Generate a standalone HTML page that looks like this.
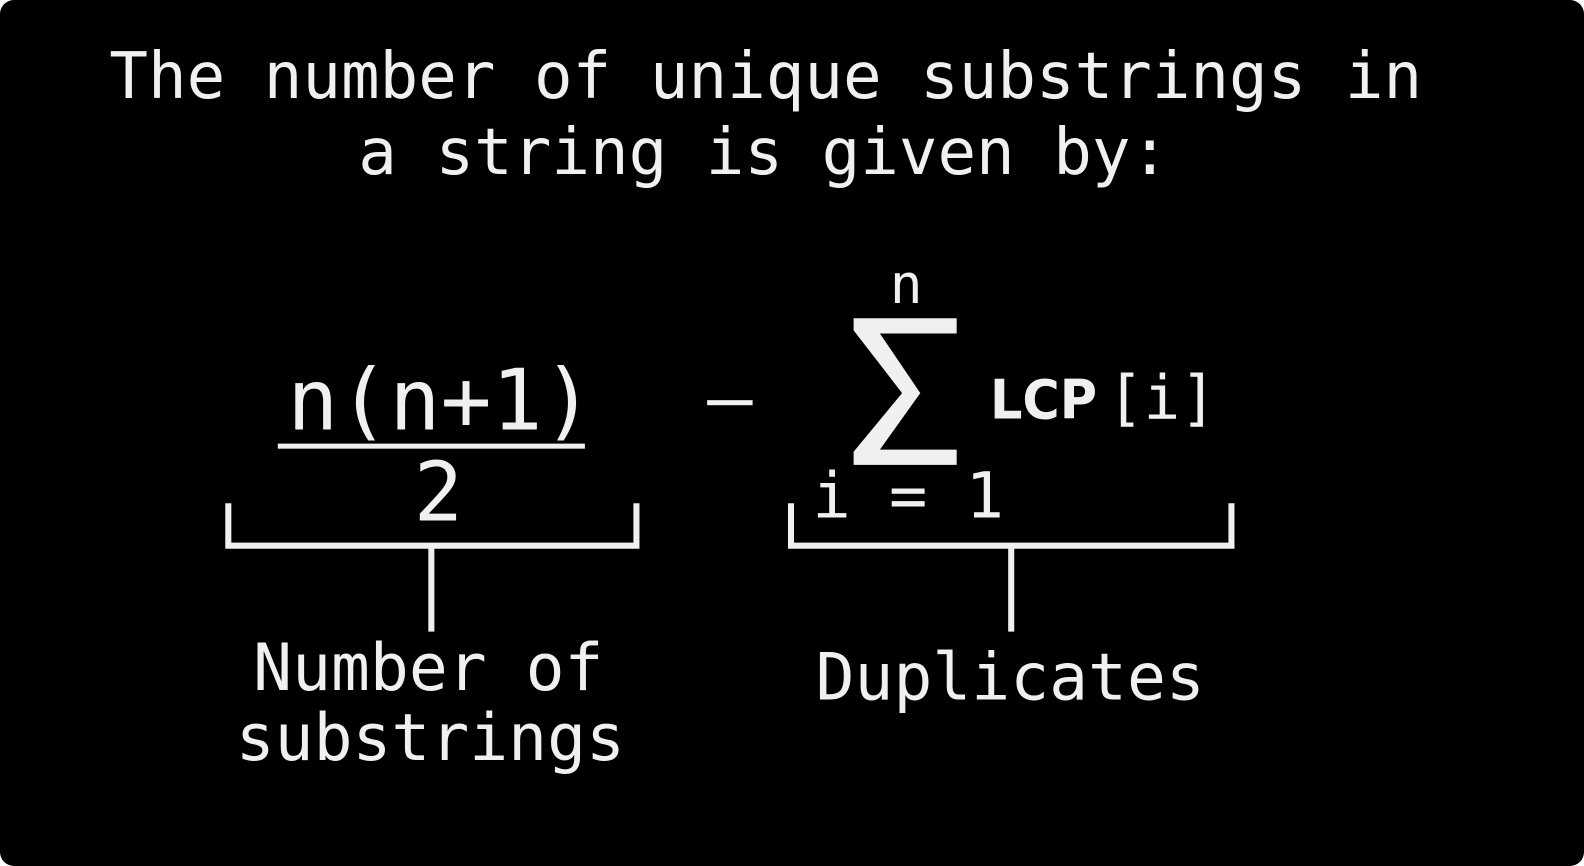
<!DOCTYPE html>
<html><head><style>
html,body{margin:0;padding:0;background:#fff;width:1584px;height:866px;overflow:hidden}
.box{position:absolute;left:0;top:0;width:1584px;height:866px;background:#000;border-radius:14px}
svg{position:absolute;left:0;top:0}
text{font-family:"DejaVu Sans Mono","Liberation Mono",monospace;fill:#f0f0f0}
</style></head><body>
<div class="box"></div>
<svg width="1584" height="866" viewBox="0 0 1568 857" preserveAspectRatio="none">
<g text-anchor="middle">
<text x="758" y="97" font-size="63.5">The number of unique substrings in</text>
<text x="756" y="172" font-size="63.5">a string is given by:</text>
<text x="436" y="425" font-size="84">n(n+1)</text>
<text x="434" y="515" font-size="81">2</text>
<text x="897" y="300" font-size="54">n</text>
<text x="899" y="512" font-size="63">i = 1</text>
<text x="424" y="683" font-size="64">Number of</text>
<text x="426" y="752" font-size="64">substrings</text>
<text x="1000" y="692" font-size="64">Duplicates</text>
</g>
<text x="980" y="414" font-size="54" font-weight="bold" textLength="106" lengthAdjust="spacingAndGlyphs" style="font-family:'DejaVu Sans',sans-serif">LCP</text>
<text x="1096" y="414" font-size="60">[i]</text>
<rect x="275" y="439" width="304" height="5" fill="#f0f0f0"/>
<rect x="700" y="396" width="45" height="5" fill="#f0f0f0"/>
<polygon points="845,315 947,315 947,330 871,330 911,389 871,445 947,445 947,460 845,460 845,447 893,389 845,327" fill="#f0f0f0"/>
<g stroke="#f0f0f0" stroke-width="6" fill="none">
<polyline points="226,498 226,540 630,540 630,498"/>
<line x1="427" y1="540" x2="427" y2="625"/>
<polyline points="783,498 783,540 1219,540 1219,498"/>
<line x1="1001" y1="540" x2="1001" y2="625"/>
</g>
</svg>
</body></html>
